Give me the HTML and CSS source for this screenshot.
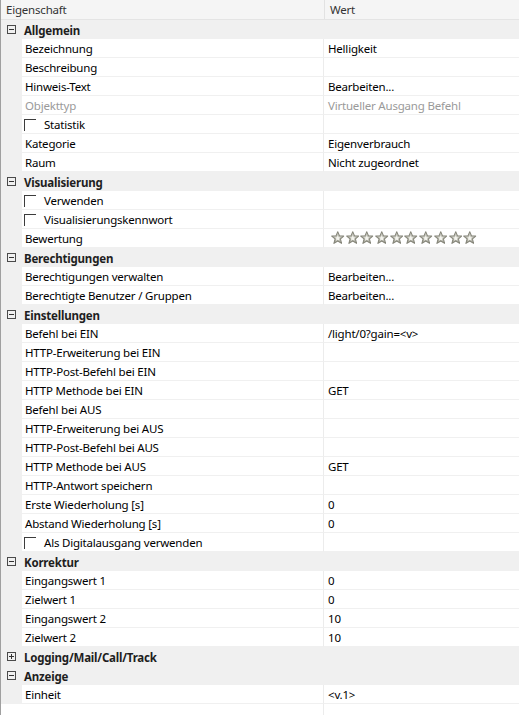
FILE: index.html
```html
<!DOCTYPE html>
<html lang="de">
<head>
<meta charset="utf-8">
<title>Eigenschaften</title>
<link rel="stylesheet" href="styles.css">
</head>
<body>
<div class="grid">
  <div class="head">
    <div class="hname">Eigenschaft</div>
    <div class="hval">Wert</div>
  </div>

  <div class="sec"><span class="exp minus"></span><span class="stitle">Allgemein</span></div>
  <div class="row"><div class="gut"></div><div class="name">Bezeichnung</div><div class="val">Helligkeit</div></div>
  <div class="row"><div class="gut"></div><div class="name">Beschreibung</div><div class="val"></div></div>
  <div class="row"><div class="gut"></div><div class="name">Hinweis-Text</div><div class="val">Bearbeiten...</div></div>
  <div class="row dis"><div class="gut"></div><div class="name">Objekttyp</div><div class="val">Virtueller Ausgang Befehl</div></div>
  <div class="row"><div class="gut"></div><div class="name chk"><span class="cb"></span>Statistik</div><div class="val"></div></div>
  <div class="row"><div class="gut"></div><div class="name">Kategorie</div><div class="val">Eigenverbrauch</div></div>
  <div class="row"><div class="gut"></div><div class="name">Raum</div><div class="val">Nicht zugeordnet</div></div>

  <div class="sec"><span class="exp minus"></span><span class="stitle">Visualisierung</span></div>
  <div class="row"><div class="gut"></div><div class="name chk"><span class="cb"></span>Verwenden</div><div class="val"></div></div>
  <div class="row"><div class="gut"></div><div class="name chk"><span class="cb"></span>Visualisierungskennwort</div><div class="val"></div></div>
  <div class="row"><div class="gut"></div><div class="name">Bewertung</div><div class="val stars" id="stars"></div></div>

  <div class="sec"><span class="exp minus"></span><span class="stitle">Berechtigungen</span></div>
  <div class="row"><div class="gut"></div><div class="name">Berechtigungen verwalten</div><div class="val">Bearbeiten...</div></div>
  <div class="row"><div class="gut"></div><div class="name">Berechtigte Benutzer / Gruppen</div><div class="val">Bearbeiten...</div></div>

  <div class="sec"><span class="exp minus"></span><span class="stitle">Einstellungen</span></div>
  <div class="row"><div class="gut"></div><div class="name">Befehl bei EIN</div><div class="val">/light/0?gain=&lt;v&gt;</div></div>
  <div class="row"><div class="gut"></div><div class="name">HTTP-Erweiterung bei EIN</div><div class="val"></div></div>
  <div class="row"><div class="gut"></div><div class="name">HTTP-Post-Befehl bei EIN</div><div class="val"></div></div>
  <div class="row"><div class="gut"></div><div class="name">HTTP Methode bei EIN</div><div class="val">GET</div></div>
  <div class="row"><div class="gut"></div><div class="name">Befehl bei AUS</div><div class="val"></div></div>
  <div class="row"><div class="gut"></div><div class="name">HTTP-Erweiterung bei AUS</div><div class="val"></div></div>
  <div class="row"><div class="gut"></div><div class="name">HTTP-Post-Befehl bei AUS</div><div class="val"></div></div>
  <div class="row"><div class="gut"></div><div class="name">HTTP Methode bei AUS</div><div class="val">GET</div></div>
  <div class="row"><div class="gut"></div><div class="name">HTTP-Antwort speichern</div><div class="val"></div></div>
  <div class="row"><div class="gut"></div><div class="name">Erste Wiederholung [s]</div><div class="val">0</div></div>
  <div class="row"><div class="gut"></div><div class="name">Abstand Wiederholung [s]</div><div class="val">0</div></div>
  <div class="row"><div class="gut"></div><div class="name chk"><span class="cb"></span>Als Digitalausgang verwenden</div><div class="val"></div></div>

  <div class="sec"><span class="exp minus"></span><span class="stitle">Korrektur</span></div>
  <div class="row"><div class="gut"></div><div class="name">Eingangswert 1</div><div class="val">0</div></div>
  <div class="row"><div class="gut"></div><div class="name">Zielwert 1</div><div class="val">0</div></div>
  <div class="row"><div class="gut"></div><div class="name">Eingangswert 2</div><div class="val">10</div></div>
  <div class="row"><div class="gut"></div><div class="name">Zielwert 2</div><div class="val">10</div></div>

  <div class="sec"><span class="exp plus"></span><span class="stitle">Logging/Mail/Call/Track</span></div>
  <div class="sec"><span class="exp minus"></span><span class="stitle">Anzeige</span></div>
  <div class="row"><div class="gut"></div><div class="name">Einheit</div><div class="val">&lt;v.1&gt;</div></div>
  <div class="filler"><div class="fname"></div><div class="fval"></div></div>
</div>
<svg width="0" height="0" class="defs">
  <defs>
    <linearGradient id="sg" x1="0" y1="0" x2="0" y2="1">
      <stop offset="0" stop-color="#d4d4cc"/>
      <stop offset="1" stop-color="#a4a498"/>
    </linearGradient>
    <symbol id="star" viewBox="0 0 12 12">
      <path d="M6 0.6 L7.5 4.2 L11.4 4.5 L8.4 7.1 L9.4 11 L6 8.9 L2.6 11 L3.6 7.1 L0.6 4.5 L4.5 4.2 Z" fill="url(#sg)" stroke="#86867a" stroke-width="0.9" stroke-linejoin="round"/>
      <path d="M6 3.8 L6.8 5.6 L8.4 5.8 L7.2 6.9 L7.6 8.6 L6 7.7 L4.4 8.6 L4.8 6.9 L3.6 5.8 L5.2 5.6 Z" fill="#f4f4ee"/>
    </symbol>
  </defs>
</svg>
<script>
  var s = document.getElementById('stars');
  var h = '';
  for (var i = 0; i < 10; i++) {
    h += '<svg class="star" width="13.5" height="13.5"><use href="#star"/></svg>';
  }
  s.innerHTML = h;
</script>
</body>
</html>
```

FILE: styles.css
```css
html, body {
  margin: 0;
  padding: 0;
  background: #ffffff;
}
body {
  font-family: "Segoe UI", "Noto Sans", "Open Sans", sans-serif;
  font-size: 11.5px;
  letter-spacing: -0.2px;
  color: #000000;
}
.defs {
  position: absolute;
  width: 0;
  height: 0;
}
.grid {
  width: 519px;
  border-left: 1px solid #a0a0a0;
  box-sizing: border-box;
}
.head {
  display: grid;
  grid-template-columns: 324px 1fr;
  height: 19px;
  background: #f5f5f5;
  border-bottom: 1px solid #e4e4e4;
  color: #333333;
}
.hname {
  padding-left: 5px;
  padding-top: 1px;
  line-height: 18px;
  border-right: 1px solid #e2e2e2;
}
.hval {
  padding-left: 5px;
  padding-top: 1px;
  line-height: 18px;
}
.sec {
  display: flex;
  align-items: center;
  height: 19px;
  background: #f0f0f0;
  font-weight: bold;
  color: #1e1e1e;
}
.exp {
  position: relative;
  width: 9px;
  height: 9px;
  border: 1px solid #4a4a4a;
  box-sizing: border-box;
  margin-left: 6px;
  margin-right: 8px;
  flex: none;
}
.exp::before {
  content: "";
  position: absolute;
  left: 1px;
  top: 3px;
  width: 5px;
  height: 1px;
  background: #333333;
}
.exp.plus::after {
  content: "";
  position: absolute;
  left: 3px;
  top: 1px;
  width: 1px;
  height: 5px;
  background: #333333;
}
.stitle {
  line-height: 19px;
  padding-top: 1px;
}
.row {
  display: grid;
  grid-template-columns: 21px 302px 1fr;
  height: 19px;
}
.gut {
  background: #f0f0f0;
}
.name {
  background: #ffffff;
  border-bottom: 1px solid #f0f0f0;
  border-right: 1px solid #ececec;
  padding-left: 3px;
  padding-top: 1px;
  line-height: 17px;
  white-space: nowrap;
  overflow: hidden;
  display: flex;
  align-items: center;
}
.val {
  background: #ffffff;
  border-bottom: 1px solid #f0f0f0;
  padding-left: 4px;
  padding-top: 1px;
  line-height: 17px;
  white-space: nowrap;
  overflow: hidden;
}
.dis .name, .dis .val {
  color: #9a9a9a;
}
.cb {
  display: inline-block;
  width: 12px;
  height: 12px;
  box-sizing: border-box;
  border-top: 1px solid #3c3c3c;
  border-left: 1px solid #3c3c3c;
  margin-left: -1px;
  margin-right: 8px;
  flex: none;
}
.stars {
  display: flex;
  align-items: center;
  gap: 1.2px;
  padding-left: 7px;
  padding-top: 0;
}
.star {
  display: block;
  flex: none;
}
.filler {
  display: grid;
  grid-template-columns: 323px 1fr;
  height: 11px;
}
.fname {
  border-right: 1px solid #ececec;
}
```
